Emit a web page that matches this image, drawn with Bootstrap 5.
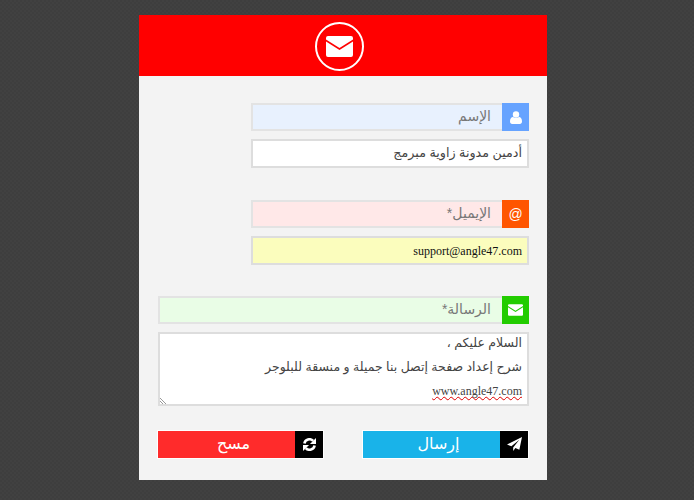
<!DOCTYPE html>
<html lang="ar" dir="rtl">
<head>
  <meta charset="UTF-8" />
  <meta name="viewport" content="width=device-width, initial-scale=1" />
  <title>اتصل بنا</title>
  <link href="https://cdn.jsdelivr.net/npm/bootstrap@5.3.0/dist/css/bootstrap.min.css" rel="stylesheet" />
  <style>
    body {
      background-color: #3f3f3f;
      /* fine dotted texture of the page background */
      background-image: repeating-conic-gradient(#414141 0 25%, #3e3e3e 0 50%);
      background-size: 4px 4px;
      font-family: "Liberation Sans", "DejaVu Sans", sans-serif;
      min-height: 500px;
      overflow: hidden;
    }

    .contact-box {
      width: 408px;
      height: 465px;
      margin: 15px 147px 0 0;
      background-color: #f3f3f3;
    }

    .contact-head {
      height: 61px;
      background-color: #ff0000;
    }

    .head-circle {
      width: 49px;
      height: 49px;
      margin: 2px 8px 0 0;
      border: 2px solid #fff;
      border-radius: 50%;
    }

    .contact-form {
      padding: 27px 18px 0 19px;
    }

    .short-field { width: 278px; }

    .field-label {
      height: 28px;
      border: 2px solid #e3e3e3;
      color: #777;
      font-size: 14px;
      margin-bottom: 8px;
    }

    .field-icon {
      width: 27px;
      height: 28px;
      margin: -2px -2px -2px 0;
      color: #fff;
      font-size: 14px;
      flex-shrink: 0;
    }

    .field-text { padding: 0 11px 2px 0; }

    .label-blue { background-color: #e8f1fe; }
    .label-blue .field-icon { background-color: #66a3ff; }
    .label-red { background-color: #ffe8e8; }
    .label-red .field-icon { background-color: #ff5500; }
    .label-green { background-color: #e9fde6; }
    .label-green .field-icon { background-color: #22cc00; }

    .field-value {
      height: 29px;
      border: 2px solid #ddd;
      background-color: #fff;
      color: #444;
      font-size: 12.700px;
      padding: 0 5px;
    }

    .value-yellow {
      background-color: #fbfdbd;
      color: #111;
      font-family: "Liberation Serif", serif;
      font-size: 12px;
    }

    .field-gap { margin-bottom: 32px; }
    .field-gap-lg { margin-bottom: 31px; }

    .message-box {
      position: relative;
      height: 74px;
      border: 2px solid #ddd;
      background-color: #fff;
      color: #444;
      font-size: 12.500px;
      padding: 1px 5px 0;
      margin-bottom: 24px;
      overflow: hidden;
    }

    .message-box p { margin: -1px 0 7px; line-height: 18px; }

    .message-link {
      font-family: "Liberation Serif", serif;
      font-size: 12px;
      text-decoration: underline wavy #e00000 1px;
      text-decoration-skip-ink: none;
    }

    .resize-mark {
      position: absolute;
      left: 0;
      bottom: 0;
    }

    .action-btn {
      width: 167px;
      height: 29px;
      border: 1px solid #fff;
      color: #fff;
      font-size: 16px;
    }

    .send-btn { background-color: #19b3e9; }
    .reset-btn { background-color: #ff2b2b; margin-left: -1px; }

    .action-icon {
      width: 28px;
      height: 27px;
      background-color: #000;
      flex-shrink: 0;
    }

    .action-text { padding: 0 0 2px 14px; }
  </style>
</head>
<body class="m-0">

<div class="contact-box">
  <!-- Header -->
  <div class="contact-head d-flex align-items-center justify-content-center">
    <div class="head-circle d-flex align-items-center justify-content-center">
      <svg width="27" height="21" viewBox="0 0 27 21"><path fill="#fff" d="M2 0h23a2 2 0 0 1 2 2v1.500L13.500 12 0 3.500V2a2 2 0 0 1 2-2zM0 5.500 13.500 14 27 5.500V19a2 2 0 0 1-2 2H2a2 2 0 0 1-2-2z"/></svg>
    </div>
  </div>

  <div class="contact-form">
    <!-- Name -->
    <div class="short-field field-gap">
      <div class="field-label label-blue d-flex align-items-center">
        <span class="field-icon d-flex align-items-center justify-content-center">
          <svg width="12" height="13" viewBox="0 0 14 15"><circle cx="7" cy="4" r="3.700" fill="#fff"/><path fill="#fff" d="M0 12c0-3 1.500-5 3.500-5 1 .8 2.200 1.200 3.500 1.200S9.500 7.800 10.500 7c2 0 3.500 2 3.500 5 0 2-1 3-2.500 3h-9C1 15 0 14 0 12z"/></svg>
        </span>
        <span class="field-text">الإسم</span>
      </div>
      <div class="field-value d-flex align-items-center">أدمين مدونة زاوية مبرمج</div>
    </div>

    <!-- Email -->
    <div class="short-field field-gap-lg">
      <div class="field-label label-red d-flex align-items-center">
        <span class="field-icon d-flex align-items-center justify-content-center">@</span>
        <span class="field-text">الإيميل*</span>
      </div>
      <div class="field-value value-yellow d-flex align-items-center">support@angle47.com</div>
    </div>

    <!-- Message -->
    <div class="field-label label-green d-flex align-items-center">
      <span class="field-icon d-flex align-items-center justify-content-center">
        <svg width="15" height="12" viewBox="0 0 27 21"><path fill="#fff" d="M2 0h23a2 2 0 0 1 2 2v1.500L13.500 12 0 3.500V2a2 2 0 0 1 2-2zM0 5.500 13.500 14 27 5.500V19a2 2 0 0 1-2 2H2a2 2 0 0 1-2-2z"/></svg>
      </span>
      <span class="field-text">الرسالة*</span>
    </div>
    <div class="message-box">
      <p>السلام عليكم ،</p>
      <p>شرح إعداد صفحة إتصل بنا جميلة و منسقة للبلوجر</p>
      <p><span class="message-link">www.angle47.com</span></p>
      <svg class="resize-mark" width="7" height="7" viewBox="0 0 7 7"><path stroke="#999" fill="none" d="M0 1l6 6M0 4l3 3"/></svg>
    </div>

    <!-- Buttons -->
    <div class="d-flex justify-content-between">
      <div class="action-btn send-btn d-flex align-items-center">
        <span class="action-icon d-flex align-items-center justify-content-center">
          <svg width="15" height="15" viewBox="0 0 17 17"><path fill="#fff" d="M17 0 14 14.500 9.500 12.500 7 16V12L14 3 5 10.500 0 8.500z"/></svg>
        </span>
        <span class="action-text flex-grow-1 text-center">إرسال</span>
      </div>
      <div class="action-btn reset-btn d-flex align-items-center">
        <span class="action-icon d-flex align-items-center justify-content-center">
          <svg width="13" height="13" viewBox="0 0 14 14"><path fill="none" stroke="#fff" stroke-width="2.800" d="M1.500 6A5.500 5.500 0 0 1 11 3.200M12.500 8A5.500 5.500 0 0 1 3 10.800"/><path fill="#fff" d="M14 0v6.500H7.500zM0 14V7.500H6.500z"/></svg>
        </span>
        <span class="action-text flex-grow-1 text-center">مسح</span>
      </div>
    </div>
  </div>
</div>

<script src="https://cdn.jsdelivr.net/npm/bootstrap@5.3.0/dist/js/bootstrap.bundle.min.js"></script>
</body>
</html>
